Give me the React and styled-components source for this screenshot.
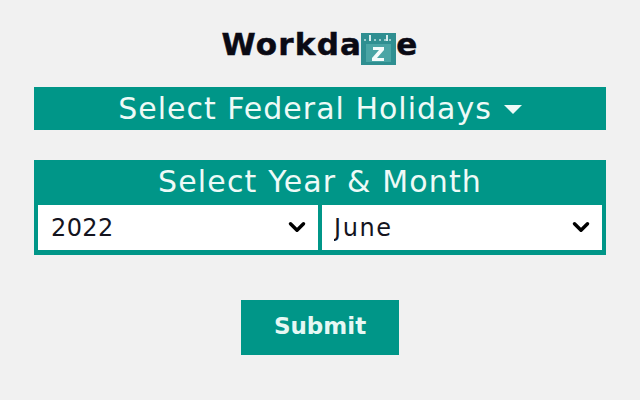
import React from 'react';
import styled, { createGlobalStyle } from 'styled-components';
import { ChevronDown } from 'lucide-react';

const teal = '#009688';

const Global = createGlobalStyle`
  html, body {
    margin: 0;
    height: 100%;
    background: #f1f1f1;
    font-family: "DejaVu Sans", Verdana, sans-serif;
  }
`;

const Page = styled.div`
  width: 640px;
  height: 400px;
  box-sizing: border-box;
  padding: 24px 34px 0;
  display: flex;
  flex-direction: column;
  overflow: hidden;
`;

const Title = styled.h1`
  margin: 0;
  height: 40px;
  display: flex;
  align-items: center;
  justify-content: center;
  font-size: 31px;
  font-weight: 700;
  letter-spacing: 1.2px;
  -webkit-text-stroke: 0.5px #0a0a14;
  color: #0a0a14;
`;

const TitleIcon = styled.svg`
  width: 35px;
  height: 32px;
  margin: 10px 0 0 -1px;
  flex: none;
`;

const HolidayBar = styled.div`
  margin-top: 23px;
  height: 43px;
  background: ${teal};
  color: #eefaf7;
  display: flex;
  align-items: center;
  justify-content: center;
  gap: 12px;
  font-size: 30px;
  letter-spacing: 1px;
`;

const Caret = styled.span`
  width: 0;
  height: 0;
  margin-top: 2px;
  border-left: 9px solid transparent;
  border-right: 9px solid transparent;
  border-top: 9px solid #eefaf7;
`;

const DatePanel = styled.div`
  margin-top: 30px;
  height: 95px;
  box-sizing: border-box;
  background: ${teal};
  padding: 0 4px 5px;
  display: flex;
  flex-direction: column;
`;

const PanelTitle = styled.div`
  height: 45px;
  padding-bottom: 2px;
  box-sizing: border-box;
  display: flex;
  align-items: center;
  justify-content: center;
  font-size: 30px;
  letter-spacing: 1.15px;
  color: #eefaf7;
`;

const SelectRow = styled.div`
  display: grid;
  grid-template-columns: 1fr 1fr;
  gap: 4px;
  height: 45px;
`;

const SelectWrap = styled.div`
  position: relative;
  background: #fff;
`;

const Dropdown = styled.select`
  width: 100%;
  height: 100%;
  border: none;
  outline: none;
  appearance: none;
  background: transparent;
  padding: 0 0 0 ${props => props.$inset}px;
  font-family: inherit;
  font-size: 24px;
  letter-spacing: ${props => props.$spacing}px;
  color: #14141e;
`;

const Arrow = styled(ChevronDown)`
  position: absolute;
  right: 8px;
  top: 9px;
  width: 26px;
  height: 26px;
  color: #000;
  pointer-events: none;
`;

const SubmitButton = styled.button`
  align-self: center;
  margin-top: 45px;
  width: 158px;
  height: 55px;
  border: none;
  padding: 0 0 3px;
  background: ${teal};
  color: #e6f8f4;
  font-family: inherit;
  font-size: 23px;
  font-weight: 700;
`;

const Logo = () => (
  <TitleIcon viewBox="0 0 35 32" aria-hidden="true">
    <rect width="35" height="32" fill="#2f8f91" />
    <rect x="5" y="11" width="25" height="18" fill="#4aa5a5" />
    <path d="M3 7h29" stroke="#bfe0df" strokeWidth="1.5" strokeDasharray="2 3" />
    <path d="M9 2v6M26 2v6" stroke="#d7eeee" strokeWidth="2" />
    <path d="M12 14h11v3l-7 8h7v3H11v-3l7-8h-6z" fill="#f4fbfb" />
  </TitleIcon>
);

const Select = ({ value, inset, spacing }) => (
  <SelectWrap>
    <Dropdown $inset={inset} $spacing={spacing} defaultValue={value}>
      <option>{value}</option>
    </Dropdown>
    <Arrow strokeWidth={3.2} />
  </SelectWrap>
);

const App = () => (
  <Page>
    <Global />
    <Title>
      Workda
      <Logo />
      e
    </Title>
    <HolidayBar>
      Select Federal Holidays
      <Caret />
    </HolidayBar>
    <DatePanel>
      <PanelTitle>Select Year &amp; Month</PanelTitle>
      <SelectRow>
        <Select value="2022" inset={13} spacing={0.4} />
        <Select value="June" inset={12} spacing={1.6} />
      </SelectRow>
    </DatePanel>
    <SubmitButton>Submit</SubmitButton>
  </Page>
);

export default App;
